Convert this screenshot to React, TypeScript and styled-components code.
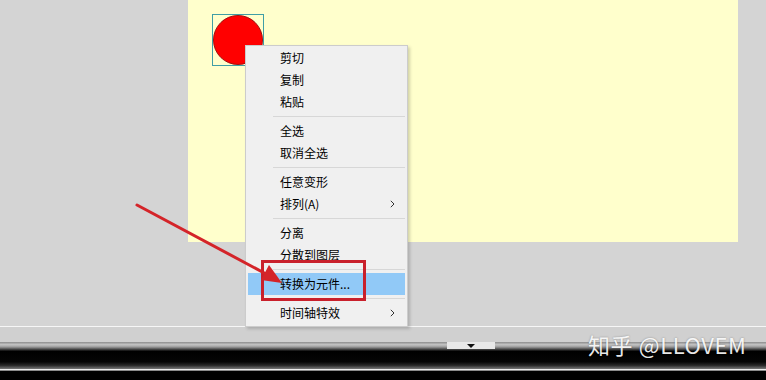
import React from "react";
import styled, { createGlobalStyle } from "styled-components";

const GlobalStyle = createGlobalStyle`
  html, body { margin: 0; padding: 0; background: #d4d4d4; }
  body { font-family: "Noto Sans CJK SC", "Noto Sans", sans-serif; }
`;

const Page = styled.div`
  position: relative;
  width: 766px;
  height: 380px;
  overflow: hidden;
  display: flex;
  flex-direction: column;
  background: #d4d4d4;
`;

const StageArea = styled.div`
  height: 326px;
  padding-left: 188px;
  box-sizing: border-box;
  flex: none;
`;

const Canvas = styled.div`
  position: relative;
  width: 550px;
  height: 242px;
  background: #ffffcc;
`;

const ShapeBox = styled.div`
  position: absolute;
  left: 24px;
  top: 14px;
  width: 52px;
  height: 52px;
  box-sizing: border-box;
  border: 1px solid #3f9ea6;
  display: flex;
`;

const Line = styled.div<{ $h: number; $bg: string }>`
  height: ${(p) => p.$h}px;
  background: ${(p) => p.$bg};
  flex: none;
`;

const Rail = styled.div`
  height: 9px;
  flex: none;
  padding-left: 447px;
  background: linear-gradient(#8c8c8c 0%, #c4c4c4 30%, #9a9a9a 55%, #3a3a3a 85%, #0a0a0a 100%);
`;

const RailTab = styled.div`
  width: 48px;
  height: 7px;
  background: #e8e8e8;
  display: flex;
  justify-content: center;
  align-items: center;
`;

const Triangle = styled.div`
  width: 0;
  height: 0;
  border-left: 4px solid transparent;
  border-right: 4px solid transparent;
  border-top: 4px solid #111;
`;

const BlackBand = styled.div`
  height: 18px;
  flex: none;
  background: linear-gradient(#000 0%, #050505 60%, #2a2a2a 80%, #7a7a7a 100%);
`;

const Menu = styled.div`
  position: absolute;
  left: 245px;
  top: 45px;
  width: 163px;
  box-sizing: border-box;
  background: #f0f0f0;
  border: 1px solid #cccccc;
  padding: 1px 2px 2px 2px;
  box-shadow: 2px 2px 3px rgba(0, 0, 0, 0.18);
  font-size: 12px;
  color: #000;
  display: flex;
  flex-direction: column;
`;

const Item = styled.div<{ $active?: boolean }>`
  height: 22px;
  display: flex;
  align-items: center;
  padding-left: 32px;
  padding-right: 10px;
  background: ${(p) => (p.$active ? "#91c9f7" : "transparent")};
  line-height: 1;
`;

const Label = styled.span`
  flex: 1;
`;

const Separator = styled.div`
  height: 7px;
  display: flex;
  align-items: center;
  padding-left: 25px;
  &::after {
    content: "";
    flex: 1;
    height: 1px;
    background: #d7d7d7;
  }
`;

const RedFrame = styled.div`
  position: absolute;
  left: 261px;
  top: 260px;
  width: 105px;
  height: 41px;
  box-sizing: border-box;
  border: 3px solid #c9202b;
`;

const Overlay = styled.svg`
  position: absolute;
  left: 0;
  top: 0;
  pointer-events: none;
`;

const Watermark = styled.div`
  position: absolute;
  left: 588px;
  top: 333px;
  font-size: 22px;
  letter-spacing: 0.6px;
  line-height: 1;
  color: rgba(255, 255, 255, 0.92);
  text-shadow: 0 0 2px rgba(0, 0, 0, 0.35);
  white-space: nowrap;
`;

const Chevron = () => (
  <svg width="5" height="8" viewBox="0 0 5 8">
    <path d="M0.8 0.8 L4 4 L0.8 7.2" fill="none" stroke="#333" strokeWidth="1" />
  </svg>
);

type Entry = { label: string; sub?: boolean; active?: boolean } | "sep";

const entries: Entry[] = [
  { label: "剪切" },
  { label: "复制" },
  { label: "粘贴" },
  "sep",
  { label: "全选" },
  { label: "取消全选" },
  "sep",
  { label: "任意变形" },
  { label: "排列(A)", sub: true },
  "sep",
  { label: "分离" },
  { label: "分散到图层" },
  "sep",
  { label: "转换为元件...", active: true },
  "sep",
  { label: "时间轴特效", sub: true },
];

export default function App() {
  return (
    <>
      <GlobalStyle />
      <Page>
        <StageArea>
          <Canvas>
            <ShapeBox>
              <svg width="50" height="50" viewBox="0 0 50 50">
                <circle cx="25" cy="25" r="24.5" fill="#ff0000" stroke="#a01010" strokeWidth="1" />
              </svg>
            </ShapeBox>
          </Canvas>
        </StageArea>
        <Line $h={1} $bg="#f6f6f6" />
        <Line $h={15} $bg="#d0d0d0" />
        <Rail>
          <RailTab>
            <Triangle />
          </RailTab>
        </Rail>
        <BlackBand />
        <Line $h={1} $bg="#efefef" />
        <Line $h={1} $bg="#8a8a8a" />
        <Line $h={9} $bg="#000" />

        <Menu>
          {entries.map((e, i) =>
            e === "sep" ? (
              <Separator key={i} />
            ) : (
              <Item key={i} $active={e.active}>
                <Label>{e.label}</Label>
                {e.sub && <Chevron />}
              </Item>
            )
          )}
        </Menu>

        <RedFrame />

        <Overlay width="766" height="380" viewBox="0 0 766 380">
          <line x1="137" y1="205" x2="268" y2="275" stroke="#d42429" strokeWidth="3" strokeLinecap="round" />
          <polygon points="282,283 261,280 269,265" fill="#d42429" />
        </Overlay>

        <Watermark>知乎 @LLOVEM</Watermark>
      </Page>
    </>
  );
}
